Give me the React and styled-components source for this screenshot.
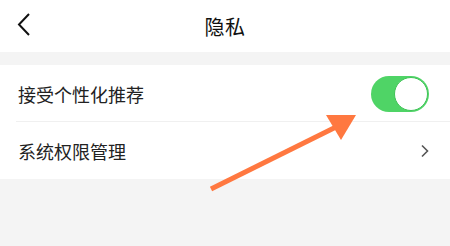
import React, { useState } from 'react';
import styled, { createGlobalStyle } from 'styled-components';

const GlobalStyle = createGlobalStyle`
  html, body {
    margin: 0;
    padding: 0;
    background: #f4f4f4;
    font-family: "Noto Sans CJK SC", "Noto Sans", sans-serif;
  }
`;

const Page = styled.div`
  position: relative;
  width: 450px;
  height: 246px;
  overflow: hidden;
  background: #f4f4f4;
`;

const Header = styled.header`
  height: 52px;
  background: #fff;
  display: flex;
  align-items: center;
  justify-content: center;
  position: relative;
`;

const BackButton = styled.button`
  position: absolute;
  left: 12px;
  top: 10px;
  width: 24px;
  height: 30px;
  padding: 0;
  border: none;
  background: none;
  display: flex;
  align-items: center;
  justify-content: center;
`;

const Title = styled.h1`
  margin: 0;
  font-size: 20px;
  font-weight: 400;
  color: #111;
  letter-spacing: 0.5px;
`;

const Group = styled.div`
  margin-top: 13px;
  background: #fff;
`;

const Row = styled.div`
  height: 57px;
  display: flex;
  align-items: center;
  justify-content: space-between;
  padding: 0 20px 0 18px;
  position: relative;
  &:not(:last-child)::after {
    content: '';
    position: absolute;
    left: 16px;
    right: 0;
    bottom: 0;
    height: 1px;
    background: #f0f0f0;
  }
`;

const Label = styled.span`
  font-size: 18px;
  color: #222;
`;

const Toggle = styled.button`
  width: 58px;
  height: 36px;
  border-radius: 18px;
  border: none;
  padding: 1px;
  margin-right: 1px;
  background: ${(p) => (p.$on ? '#4fd466' : '#e5e5e5')};
  display: flex;
  justify-content: ${(p) => (p.$on ? 'flex-end' : 'flex-start')};
  align-items: center;
`;

const Knob = styled.span`
  width: 32px;
  height: 32px;
  border-radius: 50%;
  background: #fff;
  border: 1px solid #3fc357;
`;

const Arrow = styled.svg`
  position: absolute;
  left: 0;
  top: 0;
  pointer-events: none;
`;

export default function App() {
  const [on, setOn] = useState(true);

  return (
    <Page>
      <GlobalStyle />
      <Header>
        <BackButton>
          <svg width="16" height="26" viewBox="0 0 16 26">
            <path d="M13 2 L3 12.5 L13 23" fill="none" stroke="#111" strokeWidth="2" />
          </svg>
        </BackButton>
        <Title>隐私</Title>
      </Header>
      <Group>
        <Row>
          <Label>接受个性化推荐</Label>
          <Toggle $on={on} onClick={() => setOn(!on)}>
            <Knob />
          </Toggle>
        </Row>
        <Row>
          <Label>系统权限管理</Label>
          <svg width="10" height="14" viewBox="0 0 10 14">
            <path d="M2 1.5 L7.5 7 L2 12.5" fill="none" stroke="#555" strokeWidth="1.6" />
          </svg>
        </Row>
      </Group>
      <Arrow width="450" height="246" viewBox="0 0 450 246">
        <path d="M211 189 L338 126" stroke="#ff7840" strokeWidth="5" strokeLinecap="butt" />
        <path d="M356 115 L326 115 L341 140 Z" fill="#ff7840" />
      </Arrow>
    </Page>
  );
}
